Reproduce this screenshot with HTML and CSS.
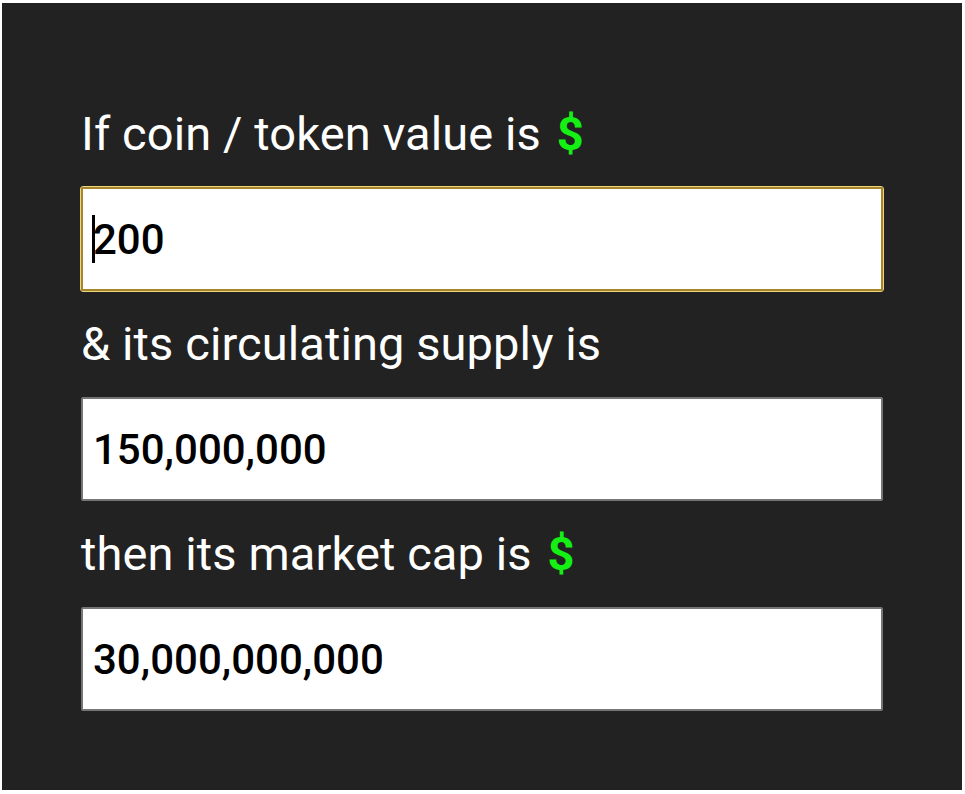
FILE: index.html
```html
<!DOCTYPE html>
<html lang="en">
<head>
    <meta charset="UTF-8">
    <meta name="viewport" content="width=device-width, initial-scale=1.0">
    <title>Market Cap Calculator</title>
    <link rel="stylesheet" href="styles.css">
</head>
<body>
    <div class="calculator">
        <label class="field-label" for="price">If coin / token value is <span class="dollar">$</span></label>
        <div class="field-wrap">
            <input type="text" id="price" class="field-input" value="200">
            <span class="caret"></span>
        </div>

        <label class="field-label" for="supply">&amp; its circulating supply is</label>
        <div class="field-wrap">
            <input type="text" id="supply" class="field-input" value="150,000,000">
        </div>

        <label class="field-label" for="cap">then its market cap is <span class="dollar">$</span></label>
        <div class="field-wrap">
            <input type="text" id="cap" class="field-input" value="30,000,000,000">
        </div>
    </div>

    <script>
        // Focus the price field with the caret at the start
        const priceInput = document.getElementById('price');
        priceInput.focus();
        priceInput.setSelectionRange(0, 0);
    </script>
</body>
</html>
```

FILE: styles.css
```css
* {
    box-sizing: border-box;
}

body {
    margin: 0;
    background-color: #fff;
    font-family: Roboto, 'Liberation Sans', Arial, sans-serif;
}

.calculator {
    margin: 3px 3px 0 2px;
    height: 787px;
    padding: 104px 0 0 79px;
    background-color: #222;
}

.field-label {
    display: block;
    color: #fff;
    font-size: 47px;
    letter-spacing: 0.1px;
    line-height: 54px;
    margin-bottom: 26px;
}

.dollar {
    margin-left: 4px;
    color: #14f014;
    font-weight: bold;
}

.field-wrap {
    position: relative;
    width: 802px;
    margin-bottom: 26px;
}

.field-input {
    display: block;
    width: 100%;
    height: 104px;
    padding: 0 10px;
    border: 2px solid #767676;
    border-radius: 2px;
    background-color: #fff;
    color: #000;
    font-family: Roboto, 'Liberation Sans', Arial, sans-serif;
    font-size: 42px;
    font-weight: 500;
}

.field-input:focus {
    border-color: #a4862f;
    outline: 1px solid #f0d57c;
    caret-color: transparent;
}

/* the text cursor, drawn so it shows in a still picture */
.caret {
    position: absolute;
    left: 11px;
    top: 28px;
    width: 3px;
    height: 48px;
    background-color: #000;
}
```
